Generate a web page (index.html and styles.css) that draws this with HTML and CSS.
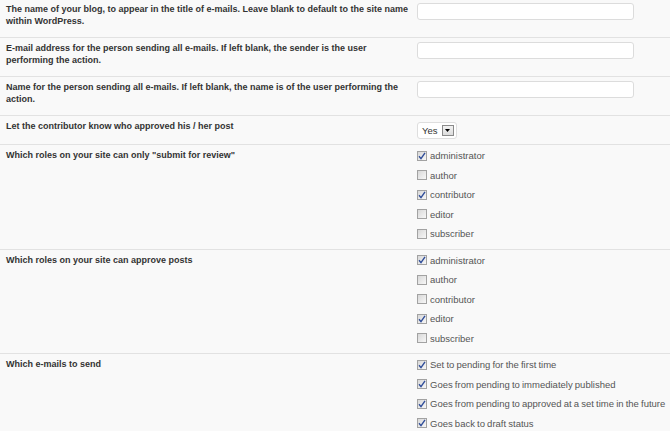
FILE: index.html
```html
<!DOCTYPE html>
<html>
<head>
<meta charset="utf-8">
<link rel="stylesheet" href="styles.css">
</head>
<body>
<div class="form">
  <div class="row">
    <div class="label">The name of your blog, to appear in the title of e-mails. Leave blank to default to the site name within WordPress.</div>
    <div class="field"><span class="input"></span></div>
  </div>
  <div class="row">
    <div class="label">E-mail address for the person sending all e-mails. If left blank, the sender is the user performing the action.</div>
    <div class="field"><span class="input"></span></div>
  </div>
  <div class="row">
    <div class="label">Name for the person sending all e-mails. If left blank, the name is of the user performing the action.</div>
    <div class="field"><span class="input"></span></div>
  </div>
  <div class="row">
    <div class="label">Let the contributor know who approved his / her post</div>
    <div class="field">
      <span class="select">Yes<span class="arrow"><svg width="5" height="3" viewBox="0 0 5 3"><path d="M0 0H5L2.5 3Z" fill="#000"/></svg></span></span>
    </div>
  </div>
  <div class="row">
    <div class="label">Which roles on your site can only "submit for review"</div>
    <div class="field list">
      <div class="item"><span class="cb on"><svg width="8" height="8" viewBox="0 0 8 8"><path d="M1 4.2L3 6.6L7 0.8" fill="none" stroke="#2f4d99" stroke-width="1.4"/></svg></span>administrator</div>
      <div class="item"><span class="cb"></span>author</div>
      <div class="item"><span class="cb on"><svg width="8" height="8" viewBox="0 0 8 8"><path d="M1 4.2L3 6.6L7 0.8" fill="none" stroke="#2f4d99" stroke-width="1.4"/></svg></span>contributor</div>
      <div class="item"><span class="cb"></span>editor</div>
      <div class="item"><span class="cb"></span>subscriber</div>
    </div>
  </div>
  <div class="row">
    <div class="label">Which roles on your site can approve posts</div>
    <div class="field list">
      <div class="item"><span class="cb on"><svg width="8" height="8" viewBox="0 0 8 8"><path d="M1 4.2L3 6.6L7 0.8" fill="none" stroke="#2f4d99" stroke-width="1.4"/></svg></span>administrator</div>
      <div class="item"><span class="cb"></span>author</div>
      <div class="item"><span class="cb"></span>contributor</div>
      <div class="item"><span class="cb on"><svg width="8" height="8" viewBox="0 0 8 8"><path d="M1 4.2L3 6.6L7 0.8" fill="none" stroke="#2f4d99" stroke-width="1.4"/></svg></span>editor</div>
      <div class="item"><span class="cb"></span>subscriber</div>
    </div>
  </div>
  <div class="row">
    <div class="label">Which e-mails to send</div>
    <div class="field list">
      <div class="item"><span class="cb on"><svg width="8" height="8" viewBox="0 0 8 8"><path d="M1 4.2L3 6.6L7 0.8" fill="none" stroke="#2f4d99" stroke-width="1.4"/></svg></span>Set to pending for the first time</div>
      <div class="item"><span class="cb on"><svg width="8" height="8" viewBox="0 0 8 8"><path d="M1 4.2L3 6.6L7 0.8" fill="none" stroke="#2f4d99" stroke-width="1.4"/></svg></span>Goes from pending to immediately published</div>
      <div class="item"><span class="cb on"><svg width="8" height="8" viewBox="0 0 8 8"><path d="M1 4.2L3 6.6L7 0.8" fill="none" stroke="#2f4d99" stroke-width="1.4"/></svg></span>Goes from pending to approved at a set time in the future</div>
      <div class="item"><span class="cb on"><svg width="8" height="8" viewBox="0 0 8 8"><path d="M1 4.2L3 6.6L7 0.8" fill="none" stroke="#2f4d99" stroke-width="1.4"/></svg></span>Goes back to draft status</div>
    </div>
  </div>
</div>
</body>
</html>
```

FILE: styles.css
```css
html, body {
  background: #f9f9f9;
}
body {
  margin: -1px 0 0 0;
  font-family: "Liberation Sans", Arial, sans-serif;
  color: #333;
}
.form {
  display: flex;
  flex-direction: column;
}
.row {
  display: grid;
  grid-template-columns: 417px 1fr;
  border-bottom: 1px solid #e2e2e2;
}
.label {
  padding: 4px 3px 10px 6px;
  font-size: 9px;
  font-weight: bold;
  line-height: 12px;
  color: #333;
}
.field {
  padding: 4px 0;
  min-width: 0;
}
.input {
  display: block;
  width: 215px;
  height: 15px;
  background: #fff;
  border: 1px solid #dcdcdc;
  border-radius: 3px;
}
.select {
  display: inline-flex;
  align-items: center;
  gap: 4px;
  margin: 1px 0;
  width: 32px;
  height: 15px;
  padding: 0 2px 0 4px;
  background: #fff;
  border: 1px solid #dedede;
  border-radius: 3px;
  font-size: 9.5px;
  color: #333;
}
.arrow {
  display: flex;
  align-items: center;
  justify-content: center;
  width: 11px;
  height: 9px;
  border: 1px solid #8a8a8a;
  background: linear-gradient(#f2f2f2, #dcdcdc);
}
.list {
  padding: 1px 0 5px 0;
}
.item {
  display: flex;
  align-items: center;
  height: 19.5px;
  font-size: 9.5px;
  word-spacing: -0.5px;
  color: #555;
  white-space: nowrap;
}
.cb {
  display: flex;
  align-items: center;
  justify-content: center;
  flex: none;
  box-sizing: border-box;
  width: 10px;
  height: 10px;
  margin: 0 3px 0 0;
  border: 1px solid #a2a2a2;
  background: linear-gradient(135deg, #d8d8d8, #f7f7f7);
}
```
